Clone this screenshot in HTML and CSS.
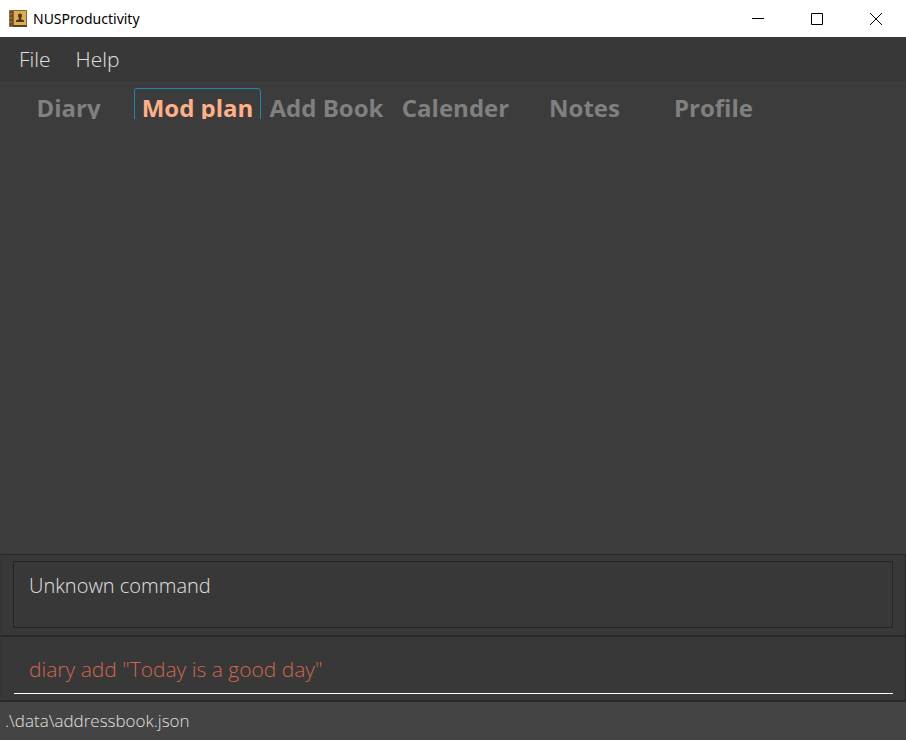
FILE: index.html
```html
<!DOCTYPE html>
<html lang="en">
<head>
  <meta charset="utf-8">
  <title>NUSProductivity</title>
  <link rel="stylesheet" href="styles.css">
</head>
<body>
  <header class="titlebar">
    <svg class="app-icon" viewBox="0 0 18 18" aria-hidden="true">
      <rect width="18" height="17" rx="1" fill="#8a6630"/>
      <rect x="5" y="1" width="12" height="14" fill="#dcae54"/>
      <rect x="1" y="1" width="3" height="15" fill="#6b4b32"/>
      <path d="M0 4h3M0 8h3M0 12h3" stroke="#a98a62"/>
      <path d="M4 16h14" stroke="#5d421f" stroke-width="2"/>
      <path d="M9 5.500a2 2 0 0 1 4 0c0 1.500-1 2-1 3.500l3 1.500V12H7v-1.500L10 9c0-1.500-1-2-1-3.500z" fill="#4e3717"/>
    </svg>
    <h1 class="app-name">NUSProductivity</h1>
    <div class="window-controls">
      <button type="button" aria-label="Minimize"><svg viewBox="0 0 12 12"><path d="M0 5.500h12"/></svg></button>
      <button type="button" aria-label="Maximize"><svg viewBox="0 0 12 12"><path d="M.5.5h11v11H.5z"/></svg></button>
      <button type="button" aria-label="Close"><svg viewBox="0 0 12 12"><path d="M0 0l12 12M12 0L0 12"/></svg></button>
    </div>
  </header>
  <nav class="menubar" aria-label="Menu">
    <button type="button">File</button>
    <button type="button">Help</button>
  </nav>
  <nav class="tabs" aria-label="Sections">
    <button type="button">Diary</button>
    <button type="button" class="active">Mod plan</button>
    <button type="button">Add Book</button>
    <button type="button">Calender</button>
    <button type="button">Notes</button>
    <button type="button">Profile</button>
  </nav>
  <main class="content"></main>
  <section class="result">
    <output class="result-box" for="command">Unknown command</output>
  </section>
  <form class="command">
    <input id="command" type="text" aria-label="Command" spellcheck="false" value='diary add "Today is a good day"'>
  </form>
  <footer class="status">.\data\addressbook.json</footer>
</body>
</html>
```
FILE: styles.css
```css
* {
  box-sizing: border-box;
}

body {
  display: flex;
  flex-direction: column;
  min-height: 100vh;
  margin: 0;
  background: #3c3c3c;
  color: #e0e0e0;
  font-family: "Open Sans", "Noto Sans", sans-serif;
  font-weight: 300;
}

button {
  padding: 0;
  border: 0;
  background: none;
  color: inherit;
  font: inherit;
}

.titlebar {
  display: flex;
  align-items: center;
  height: 37px;
  padding: 0 1px 0 9px;
  background: #fff;
  color: #000;
}

.app-icon {
  width: 18px;
  height: 18px;
}

.app-name {
  flex: 1;
  margin: 0 0 0 6px;
  font-family: "Noto Sans", sans-serif;
  font-size: 14px;
  font-weight: 400;
}

.window-controls {
  display: flex;
}

.window-controls button {
  display: grid;
  place-items: center;
  width: 59px;
  height: 34px;
}

.window-controls svg {
  width: 12px;
  height: 12px;
  fill: none;
  stroke: #000;
}

.menubar {
  display: flex;
  gap: 25px;
  height: 44px;
  padding: 0 19px;
  background: #383838;
  font-size: 21px;
  line-height: 44px;
}

.tabs {
  display: grid;
  grid-template-columns: repeat(6, 127px);
  gap: 2px;
  height: 38px;
  padding: 7px 5px 0;
  overflow: hidden;
  color: #808080;
  font-size: 24px;
  font-weight: 700;
  line-height: 34px;
}

.tabs button {
  height: 40px;
  border: 1px solid transparent;
  border-radius: 3px;
  white-space: nowrap;
}

.tabs .active {
  border-color: #1e86a8;
  color: #ffb088;
}

.content {
  flex: 1;
}

.result {
  padding: 6px 12px 7px;
  border: 1px solid #292929;
  border-left-color: #343434;
  background: #383838;
}

.result-box {
  display: block;
  height: 67px;
  padding: 8px 15px;
  border: 1px solid #262626;
  font-size: 20px;
  line-height: 32px;
}

.command {
  padding: 8px 12px 6px 13px;
  border: 1px solid #292929;
  border-left-color: #343434;
  background: #383838;
}

.command input {
  display: block;
  width: 100%;
  height: 49px;
  padding: 0 15px;
  border: 0;
  border-bottom: 1px solid #fff;
  outline: 0;
  background: none;
  color: #d06651;
  font: inherit;
  font-size: 21px;
}

.status {
  height: 39px;
  padding: 0 5px;
  border-top: 1px solid #292929;
  background: #444;
  font-size: 17px;
  line-height: 38px;
}
```
